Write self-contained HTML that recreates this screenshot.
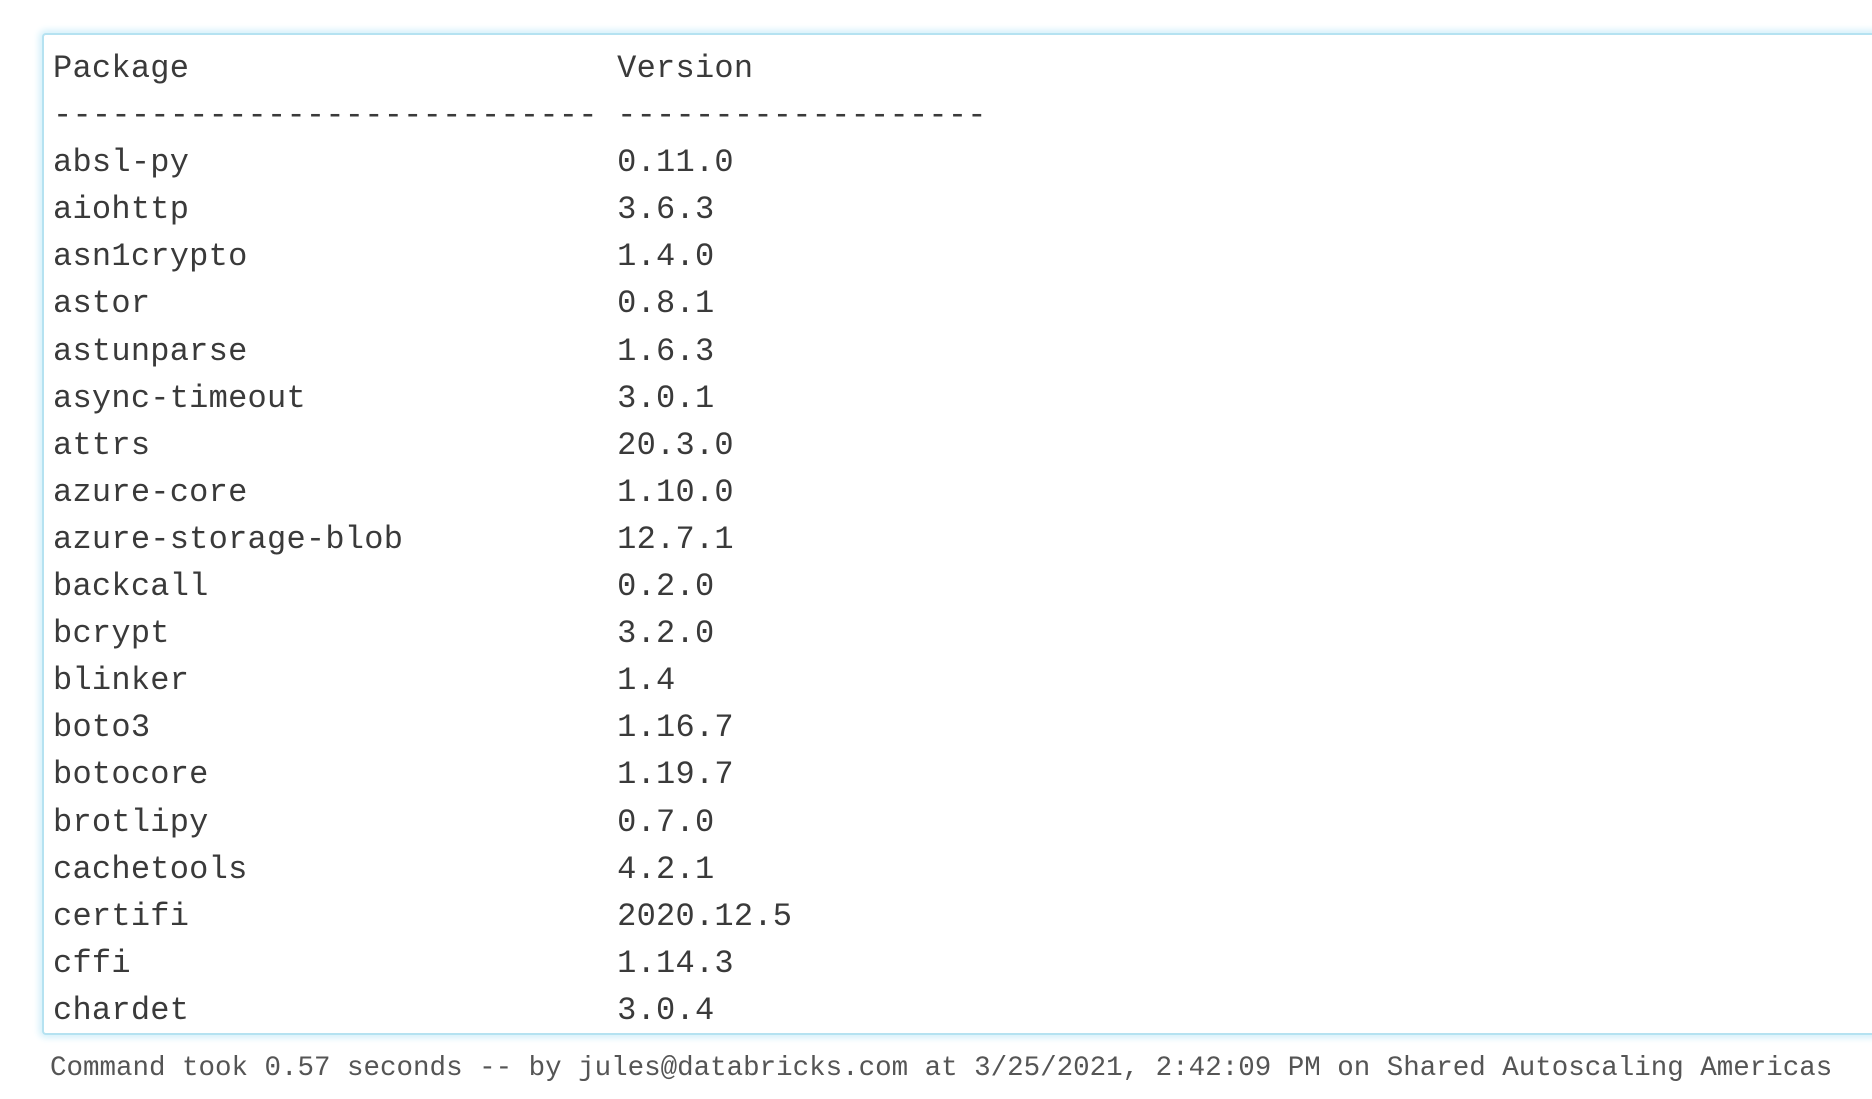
<!DOCTYPE html>
<html><head><meta charset="utf-8"><style>
html,body{margin:0;padding:0;background:#fff;width:1872px;height:1099px;overflow:hidden}
.box{position:absolute;left:42px;top:33px;width:1840px;height:998px;border:2px solid #b5e2f1;border-right:none;border-radius:4px 0 0 4px;box-shadow:0 0 7px 3px #d4f0fa;background:#fff}
pre{position:absolute;left:53px;top:45px;margin:0;font-family:"Liberation Mono",monospace;font-size:32px;line-height:47.1px;color:#3a3a3a;letter-spacing:0.25px}
.foot{position:absolute;left:50px;top:1053px;font-family:"Liberation Mono",monospace;font-size:27.5px;color:#555;white-space:pre;letter-spacing:0px}
</style></head><body>
<div class="box"></div>
<pre>Package                      Version
---------------------------- -------------------
absl-py                      0.11.0
aiohttp                      3.6.3
asn1crypto                   1.4.0
astor                        0.8.1
astunparse                   1.6.3
async-timeout                3.0.1
attrs                        20.3.0
azure-core                   1.10.0
azure-storage-blob           12.7.1
backcall                     0.2.0
bcrypt                       3.2.0
blinker                      1.4
boto3                        1.16.7
botocore                     1.19.7
brotlipy                     0.7.0
cachetools                   4.2.1
certifi                      2020.12.5
cffi                         1.14.3
chardet                      3.0.4</pre>
<div class="foot">Command took 0.57 seconds -- by jules@databricks.com at 3/25/2021, 2:42:09 PM on Shared Autoscaling Americas</div>
</body></html>
